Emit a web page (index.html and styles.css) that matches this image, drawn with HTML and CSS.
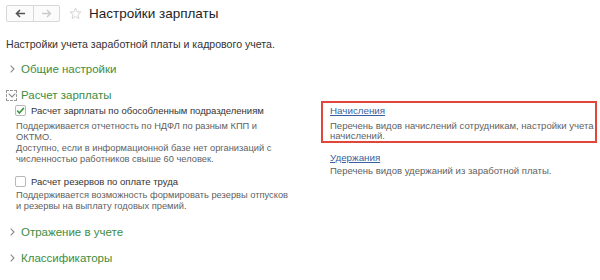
FILE: index.html
```html
<!DOCTYPE html>
<html lang="ru">
<head>
<meta charset="utf-8">
<link rel="stylesheet" href="styles.css">
</head>
<body>
<div class="page">
  <div class="header">
    <div class="nav">
      <span class="nav-btn"><svg width="11" height="9" viewBox="0 0 11 9"><path d="M5 1 L1.5 4.5 L5 8 M1.5 4.5 H10" fill="none" stroke="#555" stroke-width="1.6"/></svg></span>
      <span class="nav-btn"><svg width="11" height="9" viewBox="0 0 11 9"><path d="M6 1 L9.5 4.5 L6 8 M9.5 4.5 H1" fill="none" stroke="#cacaca" stroke-width="1.4"/></svg></span>
    </div>
    <svg class="star" width="13" height="13" viewBox="0 0 16 16"><path d="M8 1.2 L9.9 5.9 L14.8 6.2 L11 9.4 L12.2 14.3 L8 11.6 L3.8 14.3 L5 9.4 L1.2 6.2 L6.1 5.9 Z" fill="none" stroke="#cfcfcf" stroke-width="1.1"/></svg>
    <h1 class="title">Настройки зарплаты</h1>
  </div>
  <p class="intro">Настройки учета заработной платы и кадрового учета.</p>

  <div class="group">
    <div class="group-head"><span class="chev"><svg width="5" height="8" viewBox="0 0 5 8"><path d="M0.7 0.7 L4 4 L0.7 7.3" fill="none" stroke="#8a8a8a" stroke-width="1.1"/></svg></span>Общие настройки</div>
  </div>

  <div class="group open">
    <div class="group-head"><span class="chev-box"><svg width="8" height="5" viewBox="0 0 8 5"><path d="M0.7 0.7 L4 4 L7.3 0.7" fill="none" stroke="#8a8a8a" stroke-width="1.1"/></svg></span>Расчет зарплаты</div>
    <div class="cols">
      <div class="col-left">
        <label class="check"><span class="box"><svg width="11" height="9" viewBox="0 0 12 10"><path d="M1.5 5 L4.5 8.3 L10.5 1.5" fill="none" stroke="#3f9b3f" stroke-width="2.2"/></svg></span>Расчет зарплаты по обособленным подразделениям</label>
        <p class="note first">Поддерживается отчетность по НДФЛ по разным КПП и<br>ОКТМО.</p>
        <p class="note">Доступно, если в информационной базе нет организаций с<br>численностью работников свыше 60 человек.</p>
        <label class="check second"><span class="box"></span>Расчет резервов по оплате труда</label>
        <p class="note third">Поддерживается возможность формировать резервы отпусков<br>и резервы на выплату годовых премий.</p>
      </div>
      <div class="col-right">
        <div class="link-item highlight">
          <a class="link">Начисления</a>
          <p class="note">Перечень видов начислений сотрудникам, настройки учета<br>начислений.</p>
        </div>
        <div class="link-item next">
          <a class="link">Удержания</a>
          <p class="note">Перечень видов удержаний из заработной платы.</p>
        </div>
      </div>
    </div>
  </div>

  <div class="group third-group">
    <div class="group-head"><span class="chev"><svg width="5" height="8" viewBox="0 0 5 8"><path d="M0.7 0.7 L4 4 L0.7 7.3" fill="none" stroke="#8a8a8a" stroke-width="1.1"/></svg></span>Отражение в учете</div>
  </div>
  <div class="group">
    <div class="group-head"><span class="chev"><svg width="5" height="8" viewBox="0 0 5 8"><path d="M0.7 0.7 L4 4 L0.7 7.3" fill="none" stroke="#8a8a8a" stroke-width="1.1"/></svg></span>Классификаторы</div>
  </div>
</div>
</body>
</html>
```
FILE: styles.css
```css
* { box-sizing: border-box; }
html, body { margin: 0; padding: 0; background: #fff; }
body { font-family: "Liberation Sans", Arial, sans-serif; color: #333; width: 600px; height: 280px; overflow: hidden; }
.page { padding: 5px 0 0 6px; }
.header { display: flex; align-items: center; height: 17px; }
.nav { display: flex; border: 1px solid #d8d8d8; border-radius: 2px; height: 17px; background: #fbfbfb; }
.nav-btn { width: 26px; display: flex; align-items: center; justify-content: center; }
.nav-btn + .nav-btn { border-left: 1px solid #d8d8d8; }
.star { margin-left: 9px; }
.title { margin: 0 0 0 7px; font-weight: normal; font-size: 13.5px; line-height: 17px; color: #1e1e1e; }
.intro { margin: 16px 0 0 0; font-size: 10.6px; color: #333; line-height: 12px; }
.group { margin-top: 12px; }
.third-group { margin-top: 13px; }
.group-head { display: flex; align-items: center; color: #3d8d3f; font-size: 11.5px; line-height: 14px; height: 14px; }
.chev { width: 15px; padding-left: 4px; display: flex; align-items: center; }
.chev-box { width: 11px; height: 11px; border: 1px dashed #9a9a9a; display: flex; align-items: center; justify-content: center; margin-right: 4px; }
.cols { display: flex; }
.col-left { width: 315px; flex: none; padding-left: 9px; }
.col-right { width: 276px; flex: none; }
.check { display: flex; align-items: center; font-size: 9.5px; color: #333; height: 13px; margin-top: 2px; }
.check.second { margin-top: 10px; }
.box { width: 11px; height: 11px; border: 1px solid #b8b8b8; border-radius: 2px; margin-right: 5px; display: flex; align-items: center; justify-content: center; background: #fff; }
.note { margin: 0 0 0 1px; font-size: 9.3px; line-height: 11px; color: #5f5f5f; }
.note.first { margin-top: 4px; }
.note.third { margin-top: 2px; }
.link-item { padding: 0 7px; border: 2px solid transparent; }
.link-item.highlight { border-color: #e0473a; padding-top: 2px; margin-top: -1px; }
.link-item.next { margin-top: 7px; }
.link { display: block; color: #3a5fa0; text-decoration: underline; font-size: 9.8px; line-height: 11px; }
.col-right .note { margin: 5px 0 0 0; line-height: 10px; font-size: 9.55px; white-space: nowrap; }
.link-item.next .note { margin-top: 3px; }
```
